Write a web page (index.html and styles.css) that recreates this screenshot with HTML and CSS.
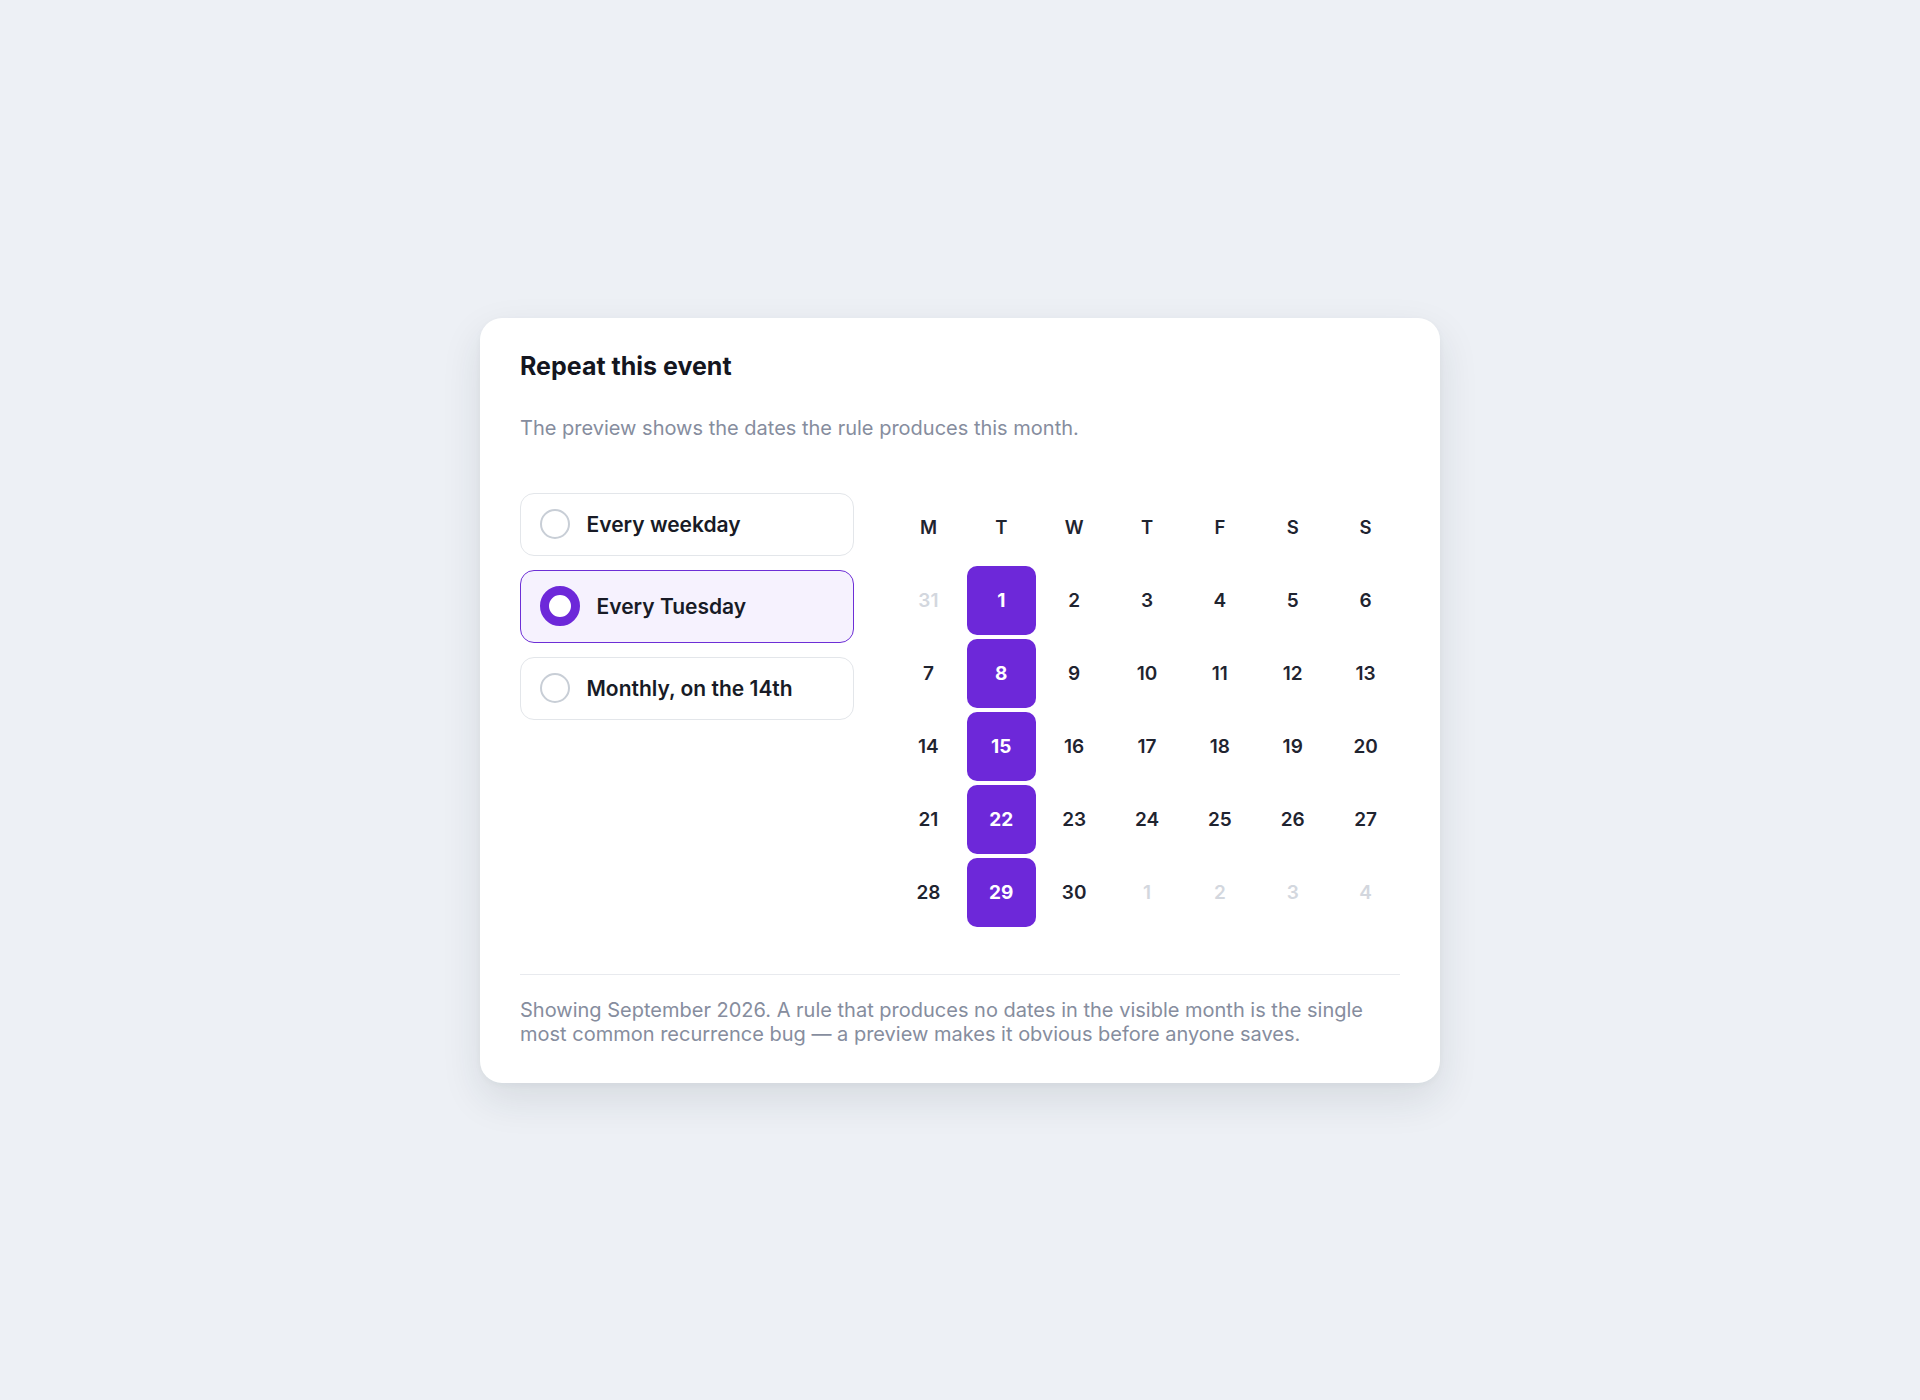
FILE: index.html
```html
<!DOCTYPE html>
<html lang="en">
<head>
<meta charset="utf-8">
<title>Repeat this event</title>
<link rel="stylesheet" href="styles.css">
</head>
<body>
<main class="card">
  <h1 class="title">Repeat this event</h1>
  <p class="subtitle">The preview shows the dates the rule produces this month.</p>
  <div class="body">
    <div class="options">
      <label class="option"><span class="radio"></span><span class="option-label">Every weekday</span></label>
      <label class="option is-selected"><span class="radio"></span><span class="option-label">Every Tuesday</span></label>
      <label class="option"><span class="radio"></span><span class="option-label">Monthly, on the 14th</span></label>
    </div>
    <div class="calendar">
      <div class="dow">M</div><div class="dow">T</div><div class="dow">W</div><div class="dow">T</div><div class="dow">F</div><div class="dow">S</div><div class="dow">S</div>

      <div class="day muted">31</div><div class="day hit">1</div><div class="day">2</div><div class="day">3</div><div class="day">4</div><div class="day">5</div><div class="day">6</div>
      <div class="day">7</div><div class="day hit">8</div><div class="day">9</div><div class="day">10</div><div class="day">11</div><div class="day">12</div><div class="day">13</div>
      <div class="day">14</div><div class="day hit">15</div><div class="day">16</div><div class="day">17</div><div class="day">18</div><div class="day">19</div><div class="day">20</div>
      <div class="day">21</div><div class="day hit">22</div><div class="day">23</div><div class="day">24</div><div class="day">25</div><div class="day">26</div><div class="day">27</div>
      <div class="day">28</div><div class="day hit">29</div><div class="day">30</div><div class="day muted">1</div><div class="day muted">2</div><div class="day muted">3</div><div class="day muted">4</div>
    </div>
  </div>
  <p class="footnote">Showing September 2026. A rule that produces no dates in the visible month is the single most common recurrence bug — a preview makes it obvious before anyone saves.</p>
</main>
</body>
</html>
```

FILE: styles.css
```css
* { box-sizing: border-box; }

html, body { height: 100%; }

body {
  margin: 0;
  background: #edf0f5;
  font-family: Inter, "Noto Sans", "Liberation Sans", sans-serif;
  color: #111827;
  display: flex;
  align-items: center;
  justify-content: center;
}

.card {
  width: 960px;
  background: #ffffff;
  border-radius: 22px;
  padding: 34px 40px 37px;
  box-shadow: 0 16px 40px rgba(30, 41, 59, 0.11), 0 2px 6px rgba(30, 41, 59, 0.04);
}

.title {
  margin: 0;
  font-size: 25px;
  line-height: 29px;
  font-weight: 700;
  color: #14161f;
}

.subtitle {
  margin: 34px 0 0;
  font-size: 20px;
  line-height: 27px;
  color: #868d9e;
}

.body {
  display: grid;
  grid-template-columns: 334px 1fr;
  column-gap: 40px;
  margin-top: 51px;
}

.options {
  display: flex;
  flex-direction: column;
  gap: 14px;
}

.option {
  display: flex;
  align-items: center;
  gap: 17px;
  padding: 15.5px 18.5px;
  border: 1.5px solid #e3e6ea;
  border-radius: 14px;
  background: #ffffff;
}

.radio {
  flex: none;
  width: 30px;
  height: 30px;
  border-radius: 50%;
  border: 2.5px solid #c8ced6;
  background: #ffffff;
}

.option-label {
  font-size: 21px;
  font-weight: 600;
  color: #181b26;
}

.option.is-selected {
  border-color: #6d2fd6;
  background: #f6f2fe;
  padding: 15.5px 18.5px;
}

.option.is-selected .radio {
  width: 40px;
  height: 40px;
  border: 9px solid #6d28d9;
}

.calendar {
  display: grid;
  grid-template-columns: repeat(7, 1fr);
  grid-auto-rows: 69.5px;
  gap: 3.5px 4px;
}

.dow,
.day {
  display: flex;
  align-items: center;
  justify-content: center;
  font-size: 19px;
  font-weight: 600;
  color: #1f2430;
}

.dow { font-size: 18.5px; }

.day.muted { color: #d3d7de; }

.day.hit {
  background: #6d28d9;
  color: #ffffff;
  font-weight: 700;
  border-radius: 10px;
}

.footnote {
  margin: 47px 0 0;
  padding-top: 22.5px;
  border-top: 1px solid #e8eaee;
  font-size: 20px;
  line-height: 24px;
  color: #868d9e;
}
```
